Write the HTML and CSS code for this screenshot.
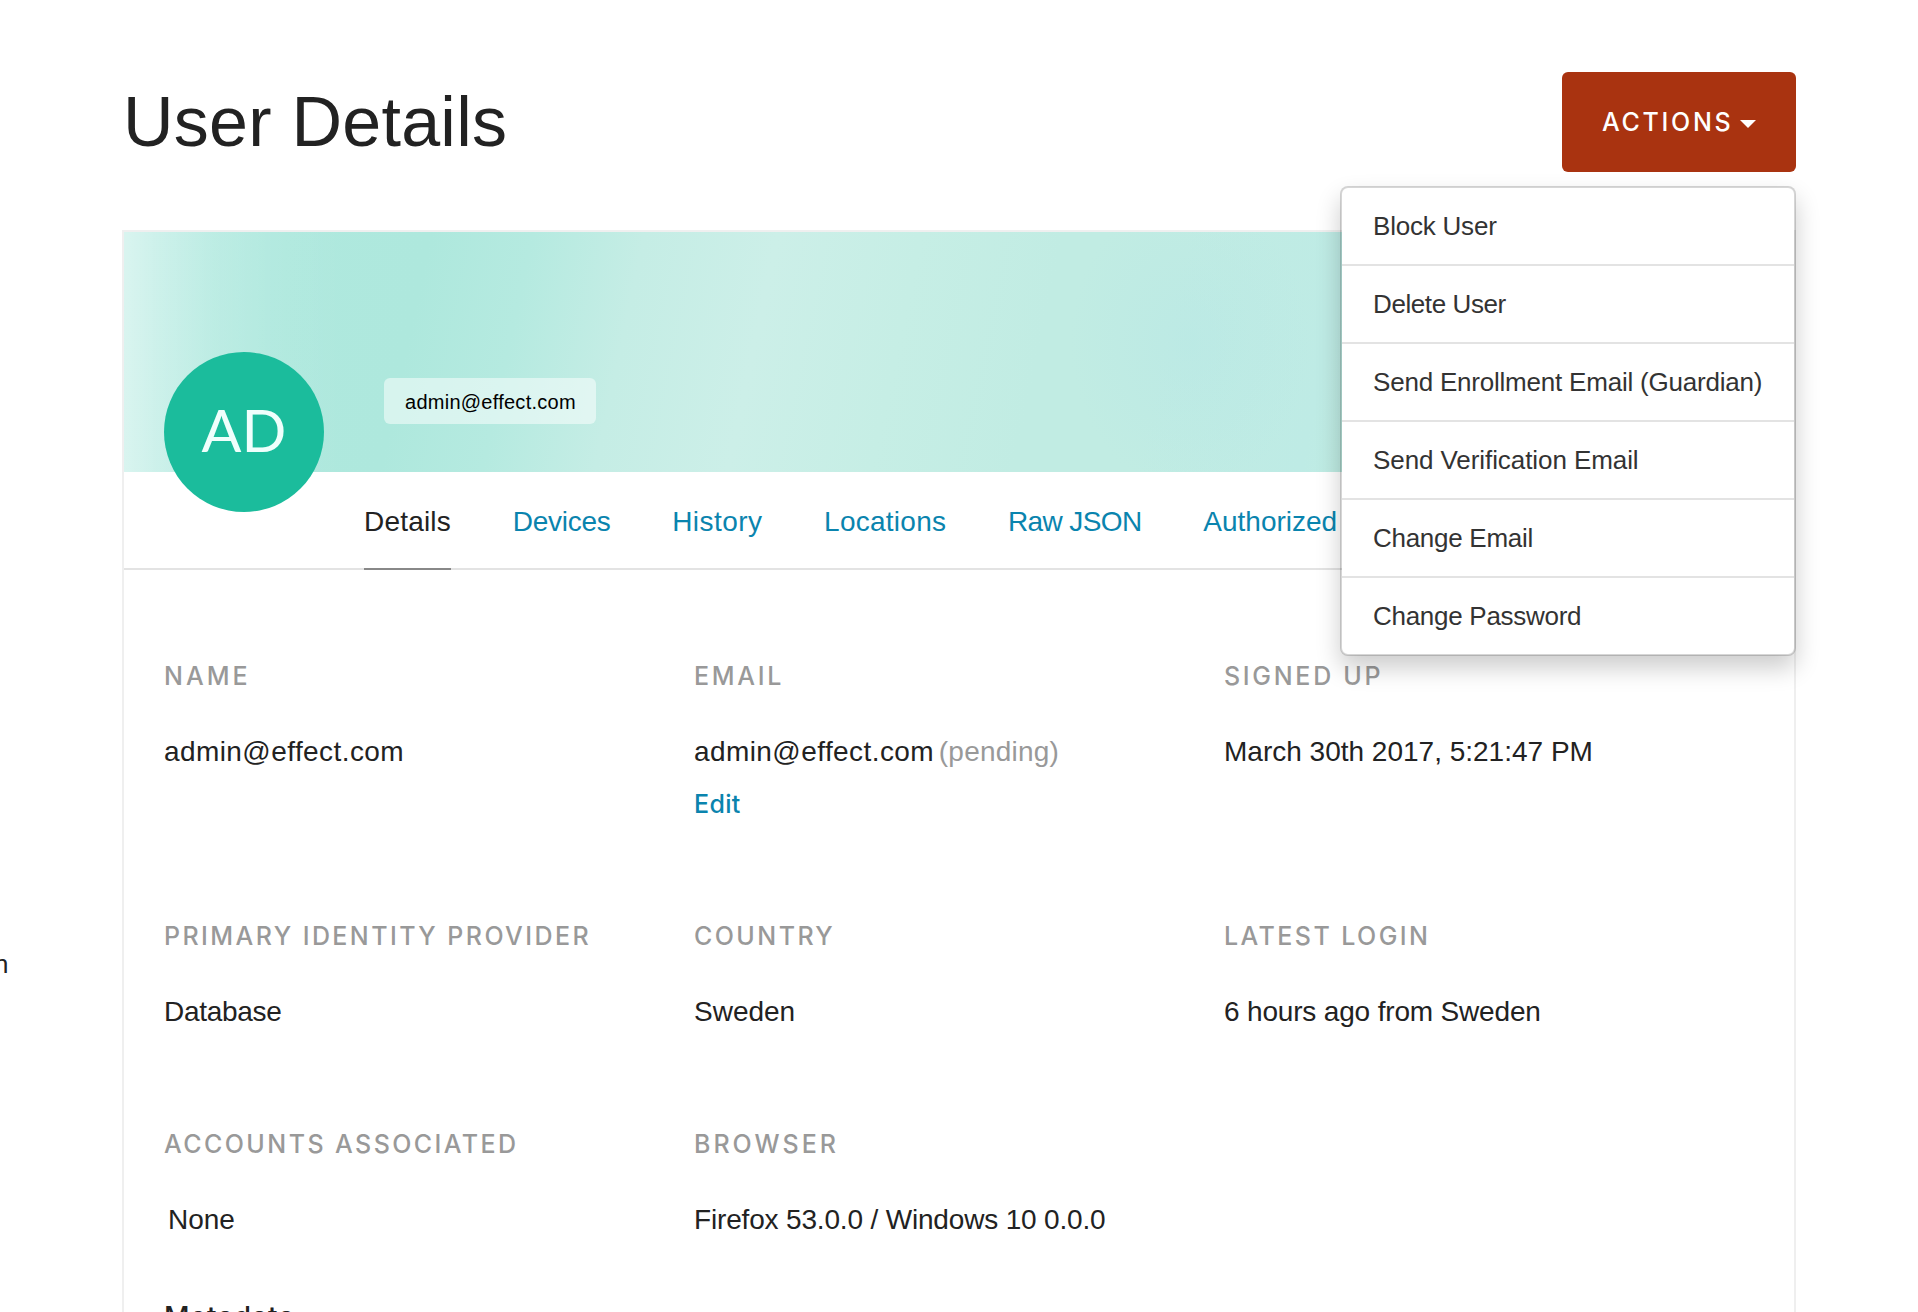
FILE: index.html
```html
<!DOCTYPE html>
<html lang="en">
<head>
<meta charset="utf-8">
<title>User Details</title>
<link rel="stylesheet" href="styles.css">
</head>
<body>
<div class="page">
  <aside class="sidebar"><span class="sidebar-text">n</span></aside>
  <main class="main">
    <header class="header">
      <h1 class="title">User Details</h1>
      <div class="actions">
        <button class="actions-btn">ACTIONS<svg class="caret" viewBox="0 0 16 8" width="16" height="8"><path d="M0 0h16L8 8z" fill="#fff"/></svg></button>
        <ul class="menu">
          <li class="menu-item">Block User</li>
          <li class="menu-item tight">Delete User</li>
          <li class="menu-item">Send Enrollment Email (Guardian)</li>
          <li class="menu-item loose">Send Verification Email</li>
          <li class="menu-item snug">Change Email</li>
          <li class="menu-item snug">Change Password</li>
        </ul>
      </div>
    </header>
    <section class="card">
      <div class="banner">
        <div class="avatar">AD</div>
        <div class="badge">admin@effect.com</div>
      </div>
      <nav class="tabs">
        <a class="tab tab-details active">Details</a>
        <a class="tab tab-devices">Devices</a>
        <a class="tab tab-history">History</a>
        <a class="tab tab-locations">Locations</a>
        <a class="tab tab-json">Raw JSON</a>
        <a class="tab">Authorized</a>
      </nav>
      <div class="details">
        <div class="field">
          <div class="label wide">NAME</div>
          <div class="value address">admin@effect.com</div>
        </div>
        <div class="field">
          <div class="label medium">EMAIL</div>
          <div class="value"><span class="address">admin@effect.com</span> <span class="muted">(pending)</span></div>
          <a class="edit">Edit</a>
        </div>
        <div class="field">
          <div class="label medium">SIGNED UP</div>
          <div class="value">March 30th 2017, 5:21:47 PM</div>
        </div>
        <div class="field">
          <div class="label">PRIMARY IDENTITY PROVIDER</div>
          <div class="value tight">Database</div>
        </div>
        <div class="field">
          <div class="label">COUNTRY</div>
          <div class="value">Sweden</div>
        </div>
        <div class="field">
          <div class="label">LATEST LOGIN</div>
          <div class="value snug">6 hours ago from Sweden</div>
        </div>
        <div class="field">
          <div class="label">ACCOUNTS ASSOCIATED</div>
          <div class="value indent">None</div>
        </div>
        <div class="field">
          <div class="label wide">BROWSER</div>
          <div class="value snug">Firefox 53.0.0 / Windows 10 0.0.0</div>
        </div>
      </div>
      <h2 class="section-title">Metadata</h2>
    </section>
  </main>
</div>
</body>
</html>
```
FILE: styles.css
```css
* { box-sizing: border-box; }
body {
  margin: 0;
  height: 1312px;
  overflow: hidden;
  background: #fff;
  color: #222;
  font-family: "Liberation Sans", Arial, sans-serif;
}
.page { display: flex; height: 1312px; }
.sidebar { flex: 0 0 122px; padding-top: 949px; }
.sidebar-text { display: block; margin-left: -6px; font-size: 26px; line-height: 30px; }
.main { width: 1674px; padding-top: 72px; }

.header { display: flex; align-items: center; justify-content: space-between; height: 100px; }
.title {
  margin: 0;
  padding-left: 1px;
  font-size: 70px;
  font-weight: 400;
  line-height: 102px;
  letter-spacing: 0.25px;
}
.actions { position: relative; }
.actions-btn {
  display: flex;
  align-items: center;
  justify-content: space-between;
  width: 234px;
  height: 100px;
  padding: 0 40px;
  border: 0;
  border-radius: 6px;
  background: #a93310;
  color: #fff;
  font: 500 25px/30px Inter, sans-serif;
  letter-spacing: 2.7px;
}
.caret { flex: none; margin: 4px 0 0 -8px; }

.menu {
  position: absolute;
  z-index: 2;
  top: 114px;
  right: 0;
  width: 456px;
  margin: 0;
  padding: 0;
  list-style: none;
  border: 2px solid rgba(0, 0, 0, 0.16);
  border-radius: 8px;
  background: #fff;
  background-clip: padding-box;
  box-shadow: 0 12px 24px rgba(0, 0, 0, 0.2);
  color: #333;
  font-size: 26px;
}
.menu-item {
  height: 78px;
  padding-left: 31px;
  border-bottom: 2px solid #e3e3e3;
  line-height: 76px;
  letter-spacing: -0.21px;
  white-space: nowrap;
}
.menu-item:last-child { height: 76px; border: 0; }
.menu-item.tight { letter-spacing: -0.4px; }
.menu-item.snug { letter-spacing: -0.28px; }
.menu-item.loose { letter-spacing: -0.08px; }

.card { height: 1100px; margin-top: 58px; border: 2px solid #efefef; }
.banner {
  display: flex;
  height: 240px;
  padding: 120px 0 0 40px;
  background:
    linear-gradient(90deg, rgba(255, 255, 255, 0.52) 0, rgba(255, 255, 255, 0.36) 35px, rgba(255, 255, 255, 0.17) 90px, rgba(255, 255, 255, 0.05) 150px, transparent 220px),
    radial-gradient(ellipse 120px 150px at 1066px 110px, rgba(180, 230, 230, 0.4), transparent),
    linear-gradient(102deg, #b0e9df 0, #aee8dd 300px, #b5eae0 400px, #c5ede5 510px, #ccefe8 640px, #c6eee5 780px, #c1ece3 920px, #c1ece3 1040px, #beebe5 1200px, #bfece3 1240px);
}
.avatar {
  flex: none;
  width: 160px;
  height: 160px;
  border-radius: 50%;
  background: #1bbc9c;
  color: #effffc;
  font: 400 59px/155px Lato, sans-serif;
  text-align: center;
}
.badge {
  width: 212px;
  height: 46px;
  margin: 26px 0 0 60px;
  padding: 0 21px;
  border-radius: 6px;
  background: rgba(255, 255, 255, 0.5);
  color: #000;
  font-size: 20px;
  line-height: 48px;
  letter-spacing: 0.26px;
}

.tabs {
  display: flex;
  gap: 61.7px;
  height: 98px;
  padding-left: 240px;
  border-bottom: 2px solid #e3e3e3;
  font-size: 28px;
  line-height: 99px;
  white-space: nowrap;
}
.tab { height: 98px; color: #0a84ae; }
.tab.active { color: #222; border-bottom: 2px solid #888; }
.tab-details { letter-spacing: 0.2px; }
.tab-devices { letter-spacing: -0.25px; }
.tab-history { letter-spacing: 0.43px; }
.tab-locations { letter-spacing: 0.26px; }
.tab-json { letter-spacing: -0.6px; }

.details {
  display: grid;
  grid-template-columns: repeat(3, 1fr);
  row-gap: 93px;
  padding: 93px 40px 0;
}
.label {
  margin-bottom: 37px;
  color: #999;
  font: 500 25px/26px Inter, sans-serif;
  letter-spacing: 2.43px;
  white-space: nowrap;
}
.label.medium { letter-spacing: 2.7px; }
.label.wide { letter-spacing: 3px; }
.value { font-size: 28px; line-height: 52px; white-space: nowrap; }
.value.tight { letter-spacing: -0.3px; }
.value.snug { letter-spacing: -0.17px; }
.address { letter-spacing: 0.42px; }
.indent { padding-left: 4px; }
.muted { margin-left: -3px; color: #999; letter-spacing: 0.2px; }
.edit { display: block; color: #0a84ae; font: 500 25px/52px Inter, sans-serif; letter-spacing: 0.3px; }
.section-title { margin: 53px 40px 0; font: 500 28px/36px Inter, sans-serif; letter-spacing: 0.55px; }
```
